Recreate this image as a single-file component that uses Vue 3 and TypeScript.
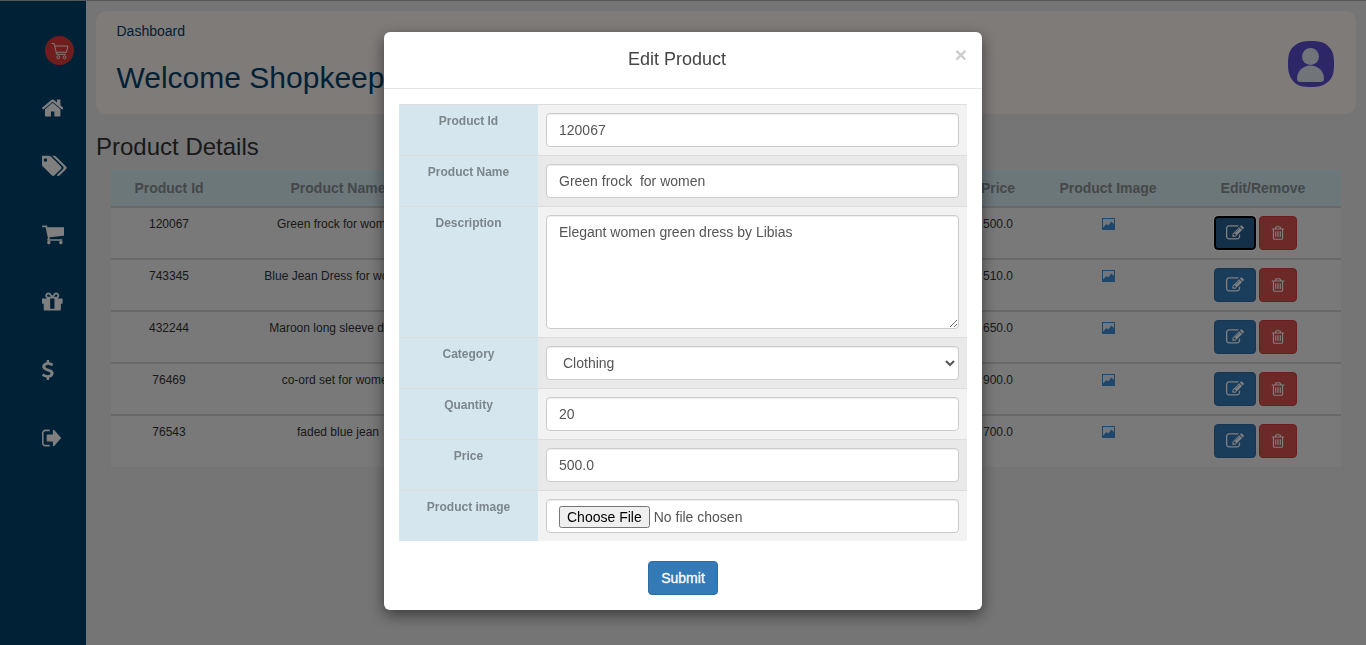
<script setup lang="ts">
  interface NavIcon {
    name: string;
    viewBox: string;
    width: number;
    path: string;
  }

  interface Product {
    id: string;
    name: string;
    price: string;
  }

  const navIcons: NavIcon[] = [
    {
      name: 'home',
      viewBox: '97 0 1598 1792',
      width: 21.4,
      path: 'M1472 992v480q0 26-19 45t-45 19h-384v-384h-256v384h-384q-26 0-45-19t-19-45v-480q0-1 .5-3t.5-3l575-474 575 474q1 2 1 6zm223-69l-62 74q-8 9-21 11h-3q-13 0-21-7l-692-577-692 577q-12 8-24 7-13-2-21-11l-62-74q-8-10-7-23.500t11-21.500l719-599q32-26 76-26t76 26l244 204v-195q0-14 9-23t23-9h192q14 0 23 9t9 23v408l219 182q10 8 11 21.500t-7 23.500z',
    },
    {
      name: 'tags',
      viewBox: '0 0 1835 1792',
      width: 24.6,
      path: 'M384 448q0-53-37.500-90.500t-90.500-37.500-90.500 37.500-37.500 90.500 37.500 90.500 90.500 37.500 90.500-37.500 37.500-90.500zm1067 576q0 53-37 90l-491 492q-39 37-91 37-53 0-90-37l-715-716q-38-37-64.500-101t-26.500-117v-416q0-52 38-90t90-38h416q53 0 117 26.500t102 64.500l715 714q37 39 37 91zm384 0q0 53-37 90l-491 492q-39 37-91 37-36 0-59-14t-53-45l470-470q37-37 37-90 0-52-37-91l-715-714q-38-38-102-64.500t-117-26.500h224q53 0 117 26.500t102 64.500l715 714q37 39 37 91z',
    },
    {
      name: 'cart',
      viewBox: '64 0 1664 1792',
      width: 22.3,
      path: 'M704 1536q0 52-38 90t-90 38-90-38-38-90 38-90 90-38 90 38 38 90zm896 0q0 52-38 90t-90 38-90-38-38-90 38-90 90-38 90 38 38 90zm128-1088v512q0 24-16.500 42.500t-40.500 21.500l-1044 122q13 60 13 70 0 16-24 64h920q26 0 45 19t19 45-19 45-45 19h-1024q-26 0-45-19t-19-45q0-11 8-31.500t16-36 21.500-40 15.500-29.500l-177-823h-204q-26 0-45-19t-19-45 19-45 45-19h256q16 0 28.500 6.500t19.500 15.500 13 24.500 8 26 5.500 29.500 4.500 26h1201q26 0 45 19t19 45z',
    },
    {
      name: 'gift',
      viewBox: '128 0 1536 1792',
      width: 20.6,
      path: 'M1056 1356v-716h-320v716q0 25 18 38.500t46 13.500h192q28 0 46-13.500t18-38.500zm-456-844h195l-126-161q-26-31-69-31-40 0-68 28t-28 68 28 68 68 28zm688-96q0-40-28-68t-68-28q-43 0-69 31l-125 161h194q40 0 68-28t28-68zm376 256v320q0 14-9 23t-23 9h-96v416q0 40-28 68t-68 28h-1088q-40 0-68-28t-28-68v-416h-96q-14 0-23-9t-9-23v-320q0-14 9-23t23-9h440q-93 0-158.500-65.500t-65.500-158.500 65.500-158.500 158.500-65.500q107 0 168 77l128 165 128-165q61-77 168-77 93 0 158.500 65.500t65.500 158.500-65.500 158.500-158.500 65.500h440q14 0 23 9t9 23z',
    },
    {
      name: 'dollar',
      viewBox: '430 0 932 1792',
      width: 11.6,
      path: 'M1362 1185q0 153-99.500 263.500t-258.500 136.500v175q0 14-9 23t-23 9h-135q-13 0-22.500-9.500t-9.500-22.500v-175q-66-9-127.500-31t-101.500-44.500-74-48-46.500-37.500-17.500-18q-17-21-2-41l103-135q7-10 23-12 15-2 24 9l2 2q113 99 243 125 37 8 74 8 81 0 142.500-43t61.500-122q0-28-15-53t-33.500-42-58.500-37.500-66-32-80-32.500q-39-16-61.500-25t-61.500-26.500-62.500-31-56.500-35.500-53.500-42.500-43.500-49-35.500-58-21-66.500-8.500-78q0-138 98-242t255-134v-180q0-13 9.500-22.500t22.500-9.500h135q14 0 23 9t9 23v176q57 6 110.500 23t87 33.500 63.500 37.500 39 29 15 14q17 18 5 38l-81 146q-8 15-23 16-14 3-27-7-3-3-14.500-12t-39-26.500-58.500-32-74.500-26-85.500-11.500q-95 0-155 43t-60 111q0 26 8.500 48t29.500 41.500 39.500 33 56 31 60.500 27 70 27.500q53 20 81 31.500t76 35 75.500 42.500 62 50 53 63.500 31.500 76.500 13 94z',
    },
    {
      name: 'sign-out',
      viewBox: '64 0 1568 1792',
      width: 19,
      path: 'M704 1440q0 4 1 20t.5 26.500-3 23.500-10 19.500-20.500 6.500h-320q-119 0-203.500-84.500t-84.500-203.500v-704q0-119 84.500-203.500t203.500-84.500h320q13 0 22.500 9.500t9.500 22.500q0 4 1 20t.5 26.500-3 23.500-10 19.500-20.500 6.500h-320q-66 0-113 47t-47 113v704q0 66 47 113t113 47h312l11.500 1 11.500 3 8 5.500 7 9 2 13.500zm928-544q0 26-19 45l-544 544q-19 19-45 19t-45-19-19-45v-288h-448q-26 0-45-19t-19-45v-384q0-26 19-45t45-19h448v-288q0-26 19-45t45-19 45 19l544 544q19 19 19 45z',
    },
  ];

  const editPath =
    'M888 1184l116-116-152-152-116 116v56h96v96h56zm440-720q-16-16-33 1l-350 350q-17 17-1 33t33-1l350-350q17-17 1-33zm80 594v190q0 119-84.500 203.500t-203.500 84.500h-832q-119 0-203.500-84.500t-84.500-203.500v-832q0-119 84.500-203.500t203.500-84.500h832q63 0 117 25 15 7 18 23 3 17-9 29l-49 49q-14 14-32 8-23-6-45-6h-832q-66 0-113 47t-47 113v832q0 66 47 113t113 47h832q66 0 113-47t47-113v-126q0-13 9-22l64-64q15-15 35-7t20 29zm-96-738l288 288-672 672h-288v-288zm444 132l-92 92-288-288 92-92q28-28 68-28t68 28l152 152q28 28 28 68t-28 68z';
  const trashPath =
    'M704 736v576q0 14-9 23t-23 9h-64q-14 0-23-9t-9-23v-576q0-14 9-23t23-9h64q14 0 23 9t9 23zm256 0v576q0 14-9 23t-23 9h-64q-14 0-23-9t-9-23v-576q0-14 9-23t23-9h64q14 0 23 9t9 23zm256 0v576q0 14-9 23t-23 9h-64q-14 0-23-9t-9-23v-576q0-14 9-23t23-9h64q14 0 23 9t9 23zm128 724v-948h-896v948q0 22 7 40.500t14.500 27 10.500 8.500h832q3 0 10.500-8.500t14.500-27 7-40.500zm-672-1076h448l-48-117q-7-9-17-11h-317q-10 2-17 11zm928 32v64q0 14-9 23t-23 9h-96v948q0 83-47 143.500t-113 60.500h-832q-66 0-113-58.500t-47-141.500v-952h-96q-14 0-23-9t-9-23v-64q0-14 9-23t23-9h309l70-167q15-37 54-63t79-26h320q40 0 79 26t54 63l70 167h309q14 0 23 9t9 23z';

  const products: Product[] = [
    { id: '120067', name: 'Green frock for women', price: '500.0' },
    { id: '743345', name: 'Blue Jean Dress for women', price: '510.0' },
    { id: '432244', name: 'Maroon long sleeve dress', price: '650.0' },
    { id: '76469', name: 'co-ord set for women', price: '900.0' },
    { id: '76543', name: 'faded blue jean', price: '700.0' },
  ];
</script>

<template>
  <div class="page">
    <aside class="sidebar">
      <div class="logo">
        <svg viewBox="0 0 24 24" width="20" height="20" fill="none" stroke="currentColor" stroke-width="1.100">
          <path d="M2 3h3l3 13h11" />
          <path d="M5.800 6h15.700l-1.800 7.500H8" />
          <circle cx="10" cy="19.500" r="1.700" />
          <circle cx="17.500" cy="19.500" r="1.700" />
        </svg>
      </div>
      <nav class="nav">
        <svg
          v-for="icon in navIcons"
          :key="icon.name"
          :class="['nav-icon', icon.name]"
          :viewBox="icon.viewBox"
          :width="icon.width"
          height="24"
          preserveAspectRatio="none"
        >
          <path :d="icon.path" />
        </svg>
      </nav>
    </aside>

    <main class="main">
      <header class="welcome">
        <div>
          <div class="crumb">Dashboard</div>
          <h1>Welcome Shopkeeper</h1>
        </div>
        <svg class="avatar" viewBox="0 0 46 46" width="46" height="46">
          <path
            class="avatar-bg"
            d="M23 0C30 0 36 .5 40.500 5.500 45.500 10 46 16 46 23S45.500 36 40.500 40.500 30 46 23 46 10 45.500 5.500 40.500 0 30 0 23 .5 10 5.500 5.500 16 0 23 0z"
          />
          <circle class="avatar-fg" cx="22.500" cy="15.500" r="8.500" />
          <path class="avatar-fg" d="M9 38c0-8 6-13.500 13.500-13.500S36 30 36 38c0 2-1.500 3-3.500 3h-20C10.500 41 9 40 9 38z" />
        </svg>
      </header>

      <h2>Product Details</h2>

      <table class="products">
        <colgroup>
          <col class="c-id" />
          <col class="c-name" />
          <col class="c-desc" />
          <col class="c-cat" />
          <col class="c-qty" />
          <col class="c-price" />
          <col class="c-img" />
          <col class="c-act" />
        </colgroup>
        <thead>
          <tr>
            <th>Product Id</th>
            <th>Product Name</th>
            <th>Description</th>
            <th>Category</th>
            <th>Quantity</th>
            <th>Price</th>
            <th>Product Image</th>
            <th>Edit/Remove</th>
          </tr>
        </thead>
        <tbody>
          <tr v-for="(item, i) in products" :key="item.id">
            <td>{{ item.id }}</td>
            <td>{{ item.name }}</td>
            <td></td>
            <td>Clothing</td>
            <td>20</td>
            <td>{{ item.price }}</td>
            <td>
              <svg class="pic" viewBox="0 0 13 12" width="13" height="12">
                <rect width="13" height="12" fill="#3d8fd4" />
                <path d="M1 1h11v5L9.500 3.500 6 7.500 4.500 6 1 9.500z" fill="#fff" opacity=".85" />
              </svg>
            </td>
            <td class="actions">
              <button type="button" :class="['btn', 'edit', { focused: i === 0 }]">
                <svg viewBox="0 0 1792 1792" width="18" height="18"><path :d="editPath" /></svg>
              </button>
              <button type="button" class="btn trash">
                <svg viewBox="0 0 1792 1792" width="16" height="16"><path :d="trashPath" /></svg>
              </button>
            </td>
          </tr>
        </tbody>
      </table>
    </main>

    <div class="backdrop"></div>
    <div class="modal-wrap">
      <div class="modal">
        <div class="modal-head">
          <span class="close">×</span>
          <h4>Edit Product</h4>
        </div>
        <div class="modal-body">
          <table class="form">
            <tbody>
              <tr>
                <th>Product Id</th>
                <td><input class="control" type="text" value="120067" /></td>
              </tr>
              <tr>
                <th>Product Name</th>
                <td><input class="control" type="text" value="Green frock  for women" /></td>
              </tr>
              <tr>
                <th>Description</th>
                <td>
                  <textarea class="control area">Elegant women green dress by Libias</textarea>
                </td>
              </tr>
              <tr>
                <th>Category</th>
                <td>
                  <select class="control">
                    <option>Clothing</option>
                  </select>
                </td>
              </tr>
              <tr>
                <th>Quantity</th>
                <td><input class="control" type="text" value="20" /></td>
              </tr>
              <tr>
                <th>Price</th>
                <td><input class="control" type="text" value="500.0" /></td>
              </tr>
              <tr>
                <th>Product image</th>
                <td><input class="control" type="file" /></td>
              </tr>
            </tbody>
          </table>
          <div class="submit-row">
            <button type="button" class="submit">Submit</button>
          </div>
        </div>
      </div>
    </div>
  </div>
</template>

<style scoped>
  .page {
    display: flex;
    min-height: 645px;
    box-sizing: border-box;
    border-top: 1px solid #aaa;
    background: #ebebeb;
    color: #333;
    font-family: 'Liberation Sans', Arial, sans-serif;
    font-size: 14px;
    line-height: 20px;
  }

  .sidebar {
    flex: 0 0 86px;
    box-sizing: border-box;
    padding: 35px 0 0 42px;
    background: #02426e;
  }

  .logo {
    display: flex;
    align-items: center;
    justify-content: center;
    width: 29px;
    height: 29px;
    margin-left: 3px;
    border-radius: 50%;
    background: #e03a3a;
    color: #fff;
  }

  .nav {
    display: flex;
    flex-direction: column;
    align-items: flex-start;
    gap: 44px;
    margin-top: 31px;
    fill: #fff;
  }

  .nav-icon.tags {
    margin-top: -10px;
  }

  .nav-icon.dollar {
    height: 20px;
    margin: 2px 0;
  }

  .main {
    flex: 1;
    min-width: 0;
    padding: 10px 10px 0;
  }

  .welcome {
    display: flex;
    align-items: center;
    justify-content: space-between;
    box-sizing: border-box;
    height: 103px;
    padding: 10px 22px 20px 20.5px;
    border-radius: 10px;
    background: #fff6f3;
  }

  .crumb {
    color: #02426e;
  }

  h1 {
    margin: 20px 0 0;
    color: #02426e;
    font-size: 30px;
    font-weight: 400;
    line-height: 33px;
  }

  .avatar {
    margin-top: 12px;
  }

  .avatar-bg {
    fill: #5a4ed0;
  }

  .avatar-fg {
    fill: #e2e8f0;
  }

  h2 {
    margin: 20px 0 10px;
    color: #333;
    font-size: 24px;
    font-weight: 400;
    line-height: 26px;
  }

  .products {
    width: 1230px;
    margin-left: 15px;
    border-collapse: collapse;
    table-layout: fixed;
    background: #f3f3f3;
    font-size: 12px;
    line-height: 17px;
    text-align: center;
  }

  .c-id {
    width: 116px;
  }

  .c-name {
    width: 222px;
  }

  .c-desc {
    width: 260px;
  }

  .c-cat {
    width: 128px;
  }

  .c-qty {
    width: 128px;
  }

  .c-price {
    width: 66px;
  }

  .c-img {
    width: 154px;
  }

  .c-act {
    width: 156px;
  }

  .products th {
    height: 36px;
    box-sizing: border-box;
    padding: 8px;
    background: #d8eef3;
    color: #8a9094;
    font-size: 14px;
    line-height: 20px;
  }

  .products td {
    height: 52px;
    box-sizing: border-box;
    padding: 8px;
    border-top: 2px solid #d0d0d0;
    vertical-align: top;
  }

  .pic {
    display: block;
    margin: 2px auto 0;
  }

  .actions {
    white-space: nowrap;
  }

  .btn {
    display: inline-flex;
    align-items: center;
    justify-content: center;
    box-sizing: border-box;
    height: 34px;
    padding: 0;
    border: 1px solid transparent;
    border-radius: 4px;
    fill: #fff;
    vertical-align: top;
  }

  .edit {
    width: 42px;
    background: #337ab7;
    border-color: #2e6da4;
  }

  .edit.focused {
    background: #286090;
    border: 2px solid #000;
    outline: 1px solid #fff;
    outline-offset: 0;
  }

  .trash {
    width: 38px;
    margin: 0 16px 0 3px;
    background: #d9534f;
    border-color: #d43f3a;
  }

  .backdrop {
    position: fixed;
    inset: 0;
    background: rgba(0, 0, 0, 0.5);
  }

  .modal-wrap {
    position: fixed;
    inset: 0;
    overflow: hidden;
  }

  .modal {
    width: 598px;
    margin: 32px auto 0;
    border-radius: 6px;
    background: #fff;
    box-shadow: 0 5px 15px rgba(0, 0, 0, 0.5);
  }

  .modal-head {
    position: relative;
    height: 57px;
    box-sizing: border-box;
    padding: 15px 27px 15px 15px;
    border-bottom: 1px solid #e5e5e5;
    text-align: center;
  }

  h4 {
    margin: 0;
    color: #444;
    font-size: 18px;
    font-weight: 400;
    line-height: 25px;
  }

  .close {
    position: absolute;
    top: 12px;
    right: 15px;
    color: #ccc;
    font-size: 21px;
    font-weight: 700;
    line-height: 21px;
  }

  .modal-body {
    padding: 15px;
  }

  .form {
    width: 568px;
    border-collapse: collapse;
    table-layout: fixed;
  }

  .form th {
    width: 139px;
    box-sizing: border-box;
    padding: 8px;
    border-top: 1px solid #ddd;
    background: #d6e6ee;
    color: #7b868c;
    font-size: 12px;
    font-weight: 700;
    line-height: 17px;
    text-align: center;
    vertical-align: top;
  }

  .form td {
    padding: 8px;
    border-top: 1px solid #ddd;
    background: #f2f2f2;
  }

  .form tr:nth-child(even) td {
    background: #e9e9e9;
  }

  .control {
    display: block;
    width: 100%;
    height: 34px;
    box-sizing: border-box;
    padding: 6px 12px;
    border: 1px solid #ccc;
    border-radius: 4px;
    background: #fff;
    box-shadow: inset 0 1px 1px rgba(0, 0, 0, 0.075);
    color: #555;
    font-family: inherit;
    font-size: 14px;
    line-height: 20px;
  }

  .area {
    height: 114px;
  }

  .submit-row {
    margin-top: 20px;
    text-align: center;
  }

  .submit {
    height: 34px;
    padding: 6px 12px;
    border: 1px solid #2e6da4;
    border-radius: 4px;
    background: #337ab7;
    color: #fff;
    font-family: inherit;
    font-size: 14px;
    font-weight: 400;
    line-height: 20px;
    -webkit-text-stroke: 0.3px #fff;
  }
</style>
